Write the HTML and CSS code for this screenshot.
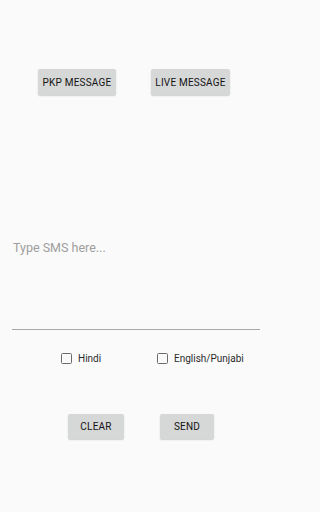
FILE: index.html
```html
<!DOCTYPE html>
<html>
<head>
<meta charset="utf-8">
<link rel="stylesheet" href="styles.css">
</head>
<body>
<div class="screen">
  <div class="top-row">
    <button class="btn btn-pkp">PKP MESSAGE</button>
    <button class="btn btn-live">LIVE MESSAGE</button>
  </div>
  <div class="sms-field">
    <div class="placeholder">Type SMS here...</div>
  </div>
  <div class="check-row">
    <label class="check check-hindi"><span class="box"></span><span class="lbl">Hindi</span></label>
    <label class="check check-eng"><span class="box"></span><span class="lbl">English/Punjabi</span></label>
  </div>
  <div class="bottom-row">
    <button class="btn btn-clear">CLEAR</button>
    <button class="btn btn-send">SEND</button>
  </div>
</div>
</body>
</html>
```
FILE: styles.css
```css
html, body {
  margin: 0;
  padding: 0;
  background: #fafafa;
}
.screen {
  width: 271px;
  height: 512px;
  font-family: Roboto, "Liberation Sans", sans-serif;
  display: flex;
  flex-direction: column;
}
.btn {
  font-family: Roboto, "Liberation Sans", sans-serif;
  font-weight: 400;
  font-size: 10px;
  color: #141414;
  background: #d6d7d7;
  border: none;
  border-radius: 2px;
  box-shadow: 0 1px 1.5px rgba(0,0,0,0.18);
  padding: 0;
  display: flex;
  align-items: center;
  justify-content: center;
  letter-spacing: 0.2px;
}
.top-row {
  display: flex;
  padding-top: 69px;
  padding-left: 38px;
  gap: 35px;
}
.btn-pkp { width: 78px; height: 26px; }
.btn-live { width: 79px; height: 26px; }
.sms-field {
  margin: 141px 11px 0 12px;
  height: 93px;
  border-bottom: 1px solid #a8a8a8;
}
.placeholder {
  font-size: 12.5px;
  color: #9e9e9e;
  padding-left: 1px;
  padding-top: 4px;
}
.check-row {
  display: flex;
  padding-top: 23px;
  padding-left: 60px;
}
.check {
  display: flex;
  align-items: center;
  font-size: 10px;
  color: #2a2a2a;
}
.check-hindi { width: 96px; }
.box {
  width: 9px;
  height: 9px;
  border: 1.5px solid #6b6b6b;
  border-radius: 1.5px;
  margin-left: 1px;
  margin-right: 6px;
}
.bottom-row {
  display: flex;
  padding-top: 50px;
  padding-left: 68px;
  gap: 36px;
}
.btn-clear { width: 56px; height: 25px; }
.btn-send { width: 54px; height: 25px; }
```
